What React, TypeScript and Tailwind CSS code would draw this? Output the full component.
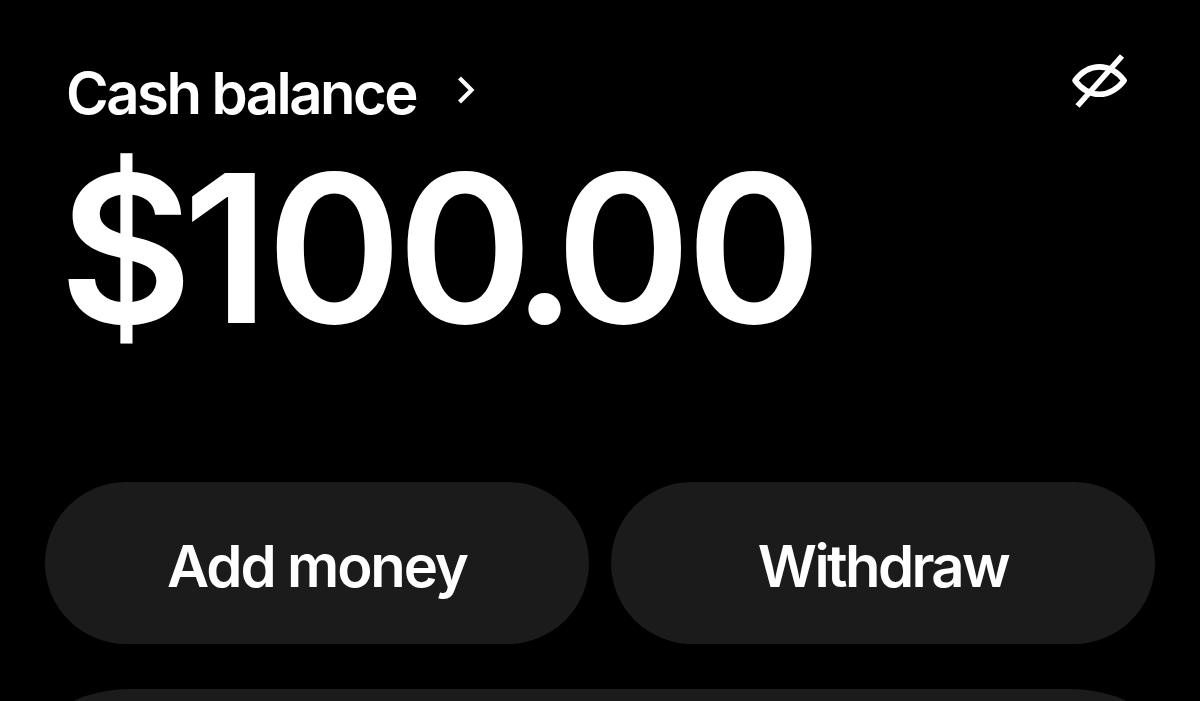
import type { ReactNode } from "react";

function HiddenEyeIcon() {
  return (
    <svg width="60" height="60" viewBox="0 0 60 60" fill="none" stroke="currentColor" strokeWidth="5.6">
      <path
        d="M5 30.5C11.5 22 20 16.9 29.5 16.9S47.5 22 54.2 30.5C47.5 39 39 44.3 29.5 44.3S11.5 39 5 30.5Z"
        strokeLinejoin="round"
      />
      <path d="M7.5 56L52 6" />
    </svg>
  );
}

function ChevronIcon() {
  return (
    <svg width="20" height="30" viewBox="0 0 20 30" fill="none" stroke="currentColor" strokeWidth="4.2">
      <path d="M2.5 3L14.5 15L2.5 27" />
    </svg>
  );
}

function ActionButton({ children }: { children: ReactNode }) {
  return (
    <button className="h-[162px] flex-1 rounded-full bg-[#1b1b1b] pt-[5px] text-[58px] leading-none font-semibold">
      {children}
    </button>
  );
}

export default function App() {
  return (
    <div className="flex h-[701px] w-[1200px] flex-col overflow-hidden bg-black font-['Inter',sans-serif] text-white">
      {/* Balance header */}
      <header className="flex h-[152px] shrink-0 items-start justify-between pr-[70px] pl-[66px]">
        <div className="flex items-center pt-[57px]">
          <h1 className="w-[391px] text-[58px] leading-[72px] font-semibold tracking-[-2.5px] whitespace-nowrap">
            Cash balance
          </h1>
          <div className="pb-[6px]">
            <ChevronIcon />
          </div>
        </div>
        <div className="pt-[50px]">
          <HiddenEyeIcon />
        </div>
      </header>

      {/* Amount, with the digits spaced by hand */}
      <div className="h-[330px] shrink-0 pl-[59px] text-[205.5px] leading-[194px] font-semibold whitespace-nowrap">
        <span className="tracking-[-10px]">$</span>
        <span className="tracking-[-3px]">1</span>
        <span className="tracking-[-5px]">0</span>
        <span className="tracking-[-21px]">0</span>
        <span className="tracking-[-21.5px]">.</span>
        <span className="tracking-[-5px]">00</span>
      </div>

      {/* Actions */}
      <div className="flex shrink-0 gap-[22px] px-[45px]">
        <ActionButton>
          <span className="tracking-[-2.1px]">Add money</span>
        </ActionButton>
        <ActionButton>
          <span className="tracking-[-2.6px]">Withdraw</span>
        </ActionButton>
      </div>

      <div className="mx-[45px] mt-[45px] h-[162px] shrink-0 rounded-[85px/48px] bg-[#1b1b1b]" />
    </div>
  );
}
